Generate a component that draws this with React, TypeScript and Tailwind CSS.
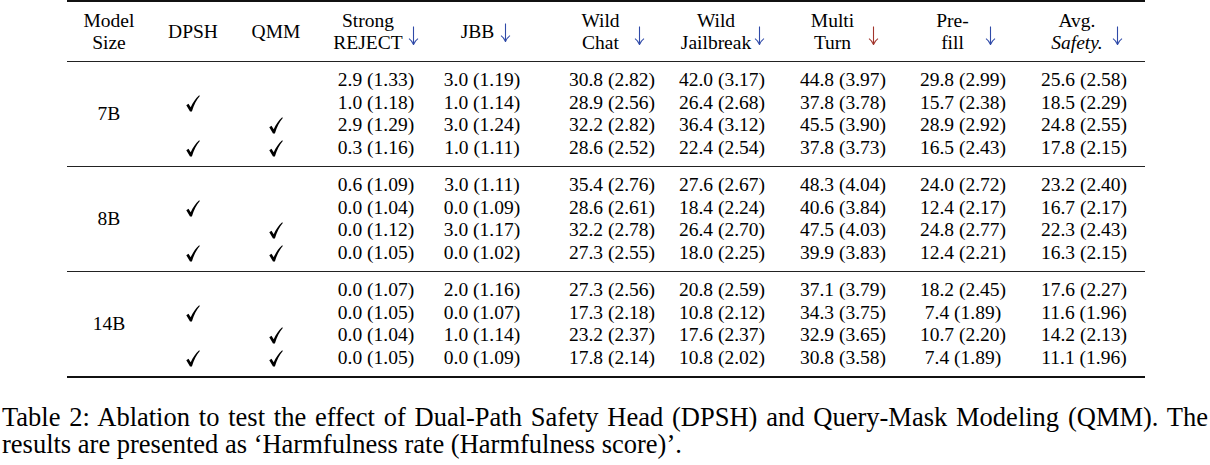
const groups = [
  {
    size: "7B",
    rows: [
      ["2.9 (1.33)", "3.0 (1.19)", "30.8 (2.82)", "42.0 (3.17)", "44.8 (3.97)", "29.8 (2.99)", "25.6 (2.58)"],
      ["1.0 (1.18)", "1.0 (1.14)", "28.9 (2.56)", "26.4 (2.68)", "37.8 (3.78)", "15.7 (2.38)", "18.5 (2.29)"],
      ["2.9 (1.29)", "3.0 (1.24)", "32.2 (2.82)", "36.4 (3.12)", "45.5 (3.90)", "28.9 (2.92)", "24.8 (2.55)"],
      ["0.3 (1.16)", "1.0 (1.11)", "28.6 (2.52)", "22.4 (2.54)", "37.8 (3.73)", "16.5 (2.43)", "17.8 (2.15)"],
    ],
  },
  {
    size: "8B",
    rows: [
      ["0.6 (1.09)", "3.0 (1.11)", "35.4 (2.76)", "27.6 (2.67)", "48.3 (4.04)", "24.0 (2.72)", "23.2 (2.40)"],
      ["0.0 (1.04)", "0.0 (1.09)", "28.6 (2.61)", "18.4 (2.24)", "40.6 (3.84)", "12.4 (2.17)", "16.7 (2.17)"],
      ["0.0 (1.12)", "3.0 (1.17)", "32.2 (2.78)", "26.4 (2.70)", "47.5 (4.03)", "24.8 (2.77)", "22.3 (2.43)"],
      ["0.0 (1.05)", "0.0 (1.02)", "27.3 (2.55)", "18.0 (2.25)", "39.9 (3.83)", "12.4 (2.21)", "16.3 (2.15)"],
    ],
  },
  {
    size: "14B",
    rows: [
      ["0.0 (1.07)", "2.0 (1.16)", "27.3 (2.56)", "20.8 (2.59)", "37.1 (3.79)", "18.2 (2.45)", "17.6 (2.27)"],
      ["0.0 (1.05)", "0.0 (1.07)", "17.3 (2.18)", "10.8 (2.12)", "34.3 (3.75)", "7.4 (1.89)", "11.6 (1.96)"],
      ["0.0 (1.04)", "1.0 (1.14)", "23.2 (2.37)", "17.6 (2.37)", "32.9 (3.65)", "10.7 (2.20)", "14.2 (2.13)"],
      ["0.0 (1.05)", "0.0 (1.09)", "17.8 (2.14)", "10.8 (2.02)", "30.8 (3.58)", "7.4 (1.89)", "11.1 (1.96)"],
    ],
  },
];

// which ablation is switched on in each of the four rows
const flags = [
  [false, false],
  [true, false],
  [false, true],
  [true, true],
];

// per-column nudges so the centred text sits where the reference has it
const dataPad = ["pr-[3px]", "pr-[12px]", "pl-[10px]", "pr-[6px]", "", "", ""];

const grid =
  "grid grid-cols-[84px_84px_91px_103px_118px_120px_116px_120px_120px_122px]";

function Check() {
  return (
    <svg width="14" height="17" viewBox="0 0 14 17" className="mt-[3px]">
      <path
        d="M0.3 10.3 L2.5 8.7 L4.7 12.3 C6.9 7.5 9.6 3.5 13.2 0.3 L13.8 1.0 C10.7 4.7 7.9 9.7 5.9 16.5 L4.0 16.5 Z"
        fill="#000"
      />
    </svg>
  );
}

function Arrow({ red, className }: { red?: boolean; className: string }) {
  const c = red ? "#a2352c" : "#2f4aa8";
  return (
    <svg width="11" height="19" viewBox="0 0 11 19" className={`shrink-0 ${className}`}>
      <path d="M5.5 0.5 V18" stroke={c} strokeWidth="1.1" fill="none" />
      <path d="M1 12.6 Q4.2 14.8 5.5 18.6 Q6.8 14.8 10 12.6" stroke={c} strokeWidth="1.1" fill="none" />
    </svg>
  );
}

function Header() {
  return (
    <div className={`${grid} h-[59px] items-center leading-[22px]`}>
      <div className="text-center">
        Model
        <br />
        Size
      </div>
      <div className="text-center">DPSH</div>
      <div className="text-center pr-[9px]">QMM</div>
      <div className="flex justify-center pr-[3px]">
        <div className="text-center">
          Strong
          <br />
          REJECT
        </div>
        <Arrow className="mt-[16px] ml-[5px]" />
      </div>
      <div className="flex justify-center items-center pr-[4px]">
        <span>JBB</span>
        <Arrow className="ml-[6px] mt-[2px]" />
      </div>
      <div className="flex justify-center pl-[12px]">
        <div className="text-center">
          Wild
          <br />
          Chat
        </div>
        <Arrow className="mt-[16px] ml-[14px]" />
      </div>
      <div className="flex justify-center pr-[4px]">
        <div className="text-center">
          Wild
          <br />
          Jailbreak
        </div>
        <Arrow className="mt-[16px] ml-[3px]" />
      </div>
      <div className="flex justify-center pl-[4px]">
        <div className="text-center">
          Multi
          <br />
          Turn
        </div>
        <Arrow red className="mt-[16px] ml-[14px]" />
      </div>
      <div className="flex justify-center pl-[6px]">
        <div className="text-center">
          Pre-
          <br />
          fill
        </div>
        <Arrow className="mt-[16px] ml-[16px]" />
      </div>
      <div className="flex justify-center pl-[6px]">
        <div className="text-center">
          Avg.
          <br />
          <i>Safety.</i>
        </div>
        <Arrow className="mt-[16px] ml-[9px]" />
      </div>
    </div>
  );
}

function Group({ size, rows }: { size: string; rows: string[][] }) {
  return (
    <div className={`${grid} py-[7px] leading-[22.5px]`}>
      <div className="row-span-4 flex items-center justify-center">{size}</div>
      {rows.map((cells, i) => (
        <div key={i} className="contents">
          <div className="flex justify-center col-start-2 h-[22.5px]">{flags[i][0] && <Check />}</div>
          <div className="flex justify-center pr-[9px] h-[22.5px]">{flags[i][1] && <Check />}</div>
          {cells.map((v, j) => (
            <div key={j} className={`flex justify-center whitespace-nowrap ${dataPad[j]}`}>
              {v}
            </div>
          ))}
        </div>
      ))}
    </div>
  );
}

export default function App() {
  return (
    <div className="w-[1210px] h-[465px] bg-white text-black font-['Liberation_Serif',serif] overflow-hidden">
      <div className="ml-[67px] w-[1078px] text-[19.5px]">
        <div className="border-t-2 border-[#111]" />
        <Header />
        <div className="border-t-[1.5px] border-[#222]" />
        {groups.map((g, i) => (
          <div key={g.size}>
            {i > 0 && <div className="border-t-[1.5px] border-[#222]" />}
            <Group size={g.size} rows={g.rows} />
          </div>
        ))}
        <div className="border-t-2 border-[#111]" />
      </div>
      <div className="mt-[26px] px-[2px] text-[26.5px] leading-[27px]">
        <p className="text-justify [text-align-last:justify] whitespace-nowrap">
          Table 2: Ablation to test the effect of Dual-Path Safety Head (DPSH) and Query-Mask Modeling (QMM). The
        </p>
        <p>results are presented as ‘Harmfulness rate (Harmfulness score)’.</p>
      </div>
    </div>
  );
}
